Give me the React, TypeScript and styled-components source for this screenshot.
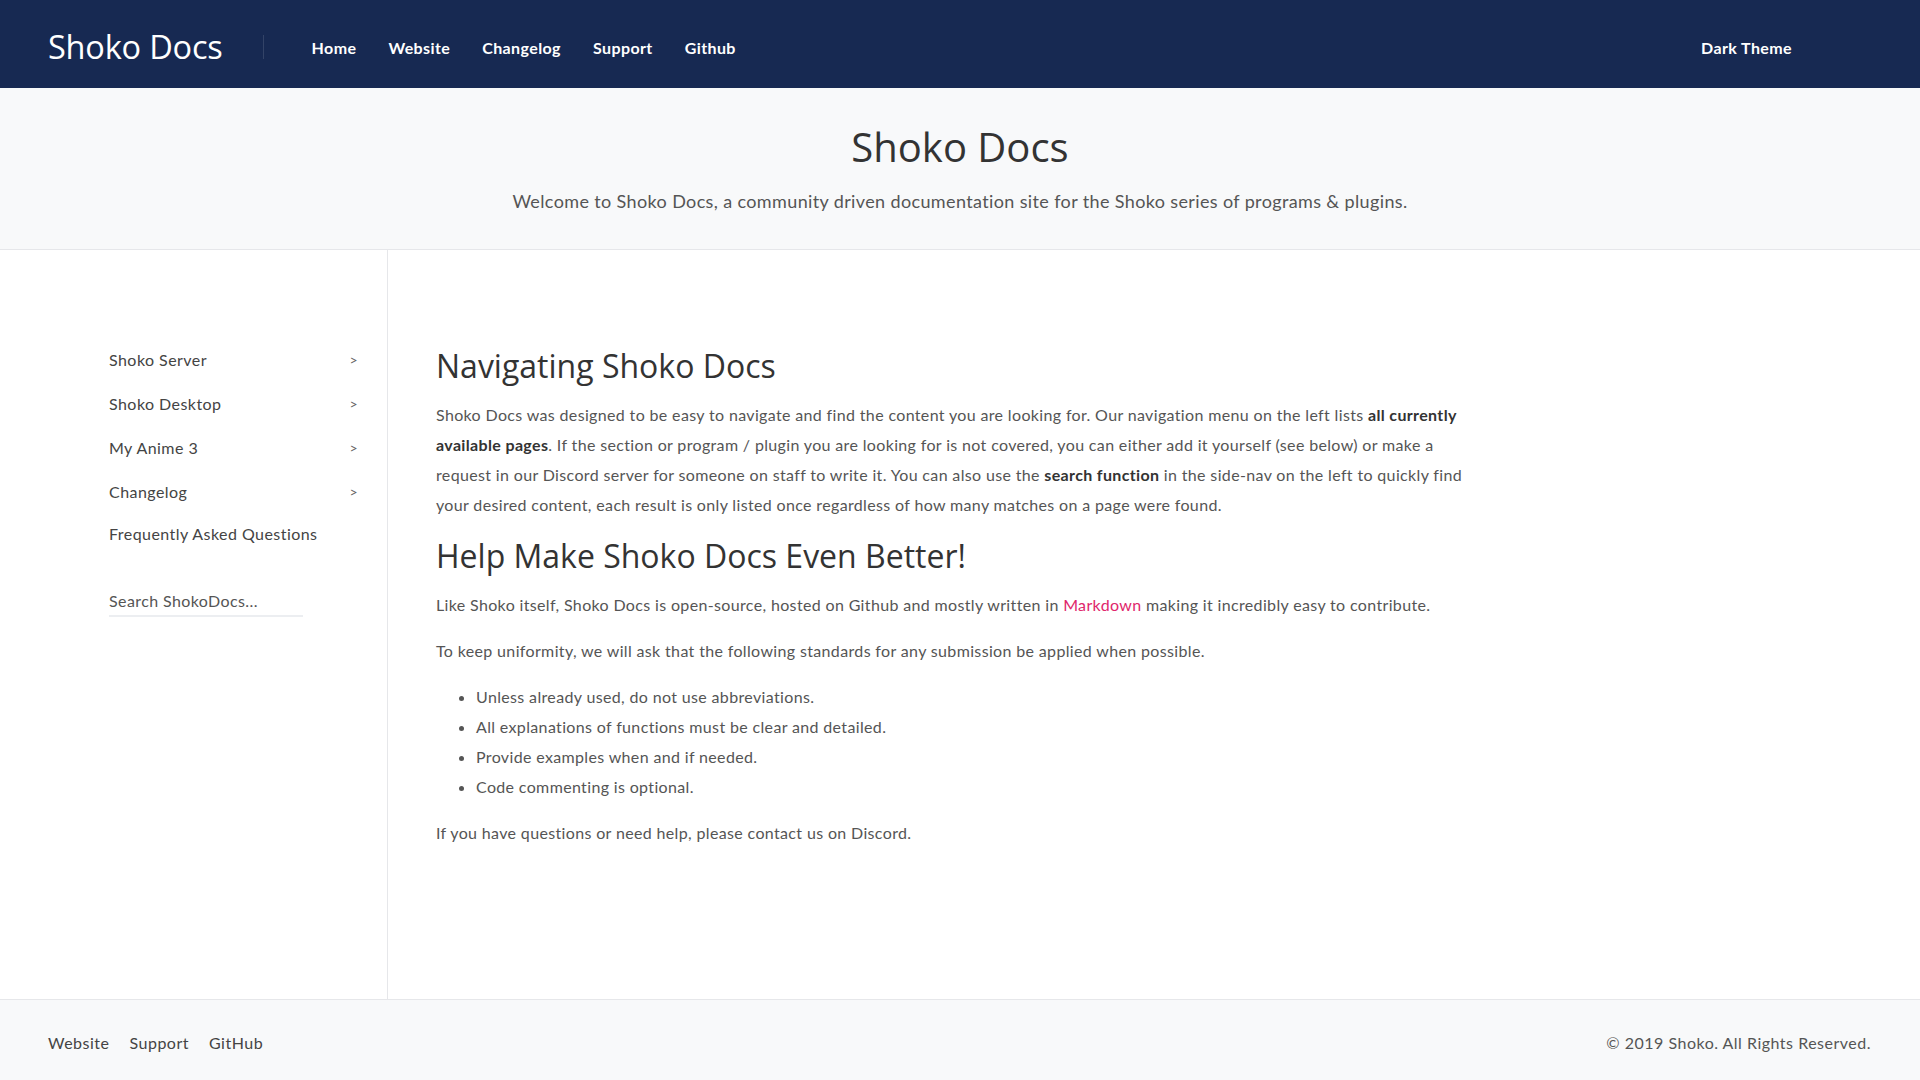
import React from "react";
import styled, { createGlobalStyle } from "styled-components";

const Global = createGlobalStyle`
  html, body { margin: 0; padding: 0; }
  body {
    font-family: "Lato", "Open Sans", sans-serif;
    color: #444;
    background: #fff;
  }
  * { box-sizing: border-box; }
`;

const Page = styled.div`
  display: flex;
  flex-direction: column;
  min-height: 1080px;
`;

const TopBar = styled.header`
  height: 88px;
  background: #172952;
  display: flex;
  align-items: center;
  padding: 6px 128px 0 48px;
`;

const Logo = styled.div`
  font-family: "Open Sans", sans-serif;
  font-size: 32.5px;
  color: #fff;
  padding-right: 40px;
  border-right: 1px solid rgba(255, 255, 255, 0.12);
  line-height: 24px;
  letter-spacing: -0.2px;
`;

const NavList = styled.nav`
  display: flex;
  gap: 32px;
  margin-left: 48px;
  flex: 1;
`;

const NavLink = styled.a`
  color: #fff;
  font-weight: 700;
  font-size: 16px;
  letter-spacing: 0.4px;
  text-decoration: none;
`;

const Hero = styled.section`
  background: #f8f9fa;
  border-bottom: 1px solid #e6e7ea;
  height: 162px;
  display: flex;
  flex-direction: column;
  align-items: center;
  padding-top: 35px;
`;

const HeroTitle = styled.h1`
  margin: 0;
  font-family: "Open Sans", sans-serif;
  font-weight: 400;
  font-size: 40px;
  line-height: 48px;
  color: #333;
`;

const HeroSub = styled.p`
  margin: 19px 0 0;
  font-size: 18px;
  letter-spacing: 0.37px;
  color: #555;
`;

const Body = styled.div`
  flex: 1;
  display: flex;
`;

const Sidebar = styled.aside`
  width: 388px;
  border-right: 1px solid #e6e7ea;
  padding: 87px 0 0 109px;
  display: flex;
  flex-direction: column;
`;

const SideItem = styled.a<{ $short?: boolean }>`
  display: flex;
  justify-content: space-between;
  width: 249px;
  height: ${(p) => (p.$short ? "40px" : "44px")};
  align-items: center;
  font-size: 16px;
  letter-spacing: 0.45px;
  color: #444;
  text-decoration: none;
`;

const Chevron = styled.span`
  font-size: 14px;
  color: #666;
`;

const SearchInput = styled.input`
  margin-top: 38px;
  width: 194px;
  border: none;
  border-bottom: 2px solid #eceef1;
  padding: 0 0 5px;
  font-family: inherit;
  font-size: 16px;
  letter-spacing: 0.4px;
  color: #444;
  outline: none;
  &::placeholder { color: #555; }
`;

const Main = styled.main`
  padding: 96px 0 0 48px;
  width: 1080px;
`;

const H2 = styled.h2`
  margin: 0 0 14px;
  font-family: "Open Sans", sans-serif;
  font-weight: 400;
  font-size: 32px;
  line-height: 40px;
  color: #333;
`;

const Para = styled.p`
  margin: 0 0 16px;
  font-size: 16px;
  letter-spacing: 0.35px;
  line-height: 30px;
  color: #555;
  b { color: #333; }
`;

const Pink = styled.a`
  color: #e0266b;
  text-decoration: none;
`;

const List = styled.ul`
  margin: 0 0 16px;
  padding-left: 40px;
  font-size: 16px;
  letter-spacing: 0.35px;
  line-height: 30px;
  color: #555;
`;

const Footer = styled.footer`
  height: 81px;
  background: #f8f9fa;
  border-top: 1px solid #e6e7ea;
  display: flex;
  align-items: center;
  justify-content: space-between;
  padding: 4px 49px 0 48px;
  font-size: 16px;
  letter-spacing: 0.5px;
  color: #555;
`;

const FootLinks = styled.div`
  display: flex;
  gap: 20px;
`;

const FootLink = styled.a`
  color: #444;
  text-decoration: none;
`;

const sideItems = ["Shoko Server", "Shoko Desktop", "My Anime 3", "Changelog"];

export default function App() {
  return (
    <Page>
      <Global />
      <TopBar>
        <Logo>Shoko Docs</Logo>
        <NavList>
          {["Home", "Website", "Changelog", "Support", "Github"].map((n) => (
            <NavLink key={n} href="#">{n}</NavLink>
          ))}
        </NavList>
        <NavLink href="#">Dark Theme</NavLink>
      </TopBar>
      <Hero>
        <HeroTitle>Shoko Docs</HeroTitle>
        <HeroSub>
          Welcome to Shoko Docs, a community driven documentation site for the Shoko series of programs &amp; plugins.
        </HeroSub>
      </Hero>
      <Body>
        <Sidebar>
          {sideItems.map((s) => (
            <SideItem key={s} href="#">
              {s}
              <Chevron>&gt;</Chevron>
            </SideItem>
          ))}
          <SideItem href="#" $short>Frequently Asked Questions</SideItem>
          <SearchInput placeholder="Search ShokoDocs..." />
        </Sidebar>
        <Main>
          <H2>Navigating Shoko Docs</H2>
          <Para>
            Shoko Docs was designed to be easy to navigate and find the content you are looking for. Our navigation menu on the left lists <b>all currently available pages</b>. If the section or program / plugin you are looking for is not covered, you can either add it yourself (see below) or make a request in our Discord server for someone on staff to write it. You can also use the <b>search function</b> in the side-nav on the left to quickly find your desired content, each result is only listed once regardless of how many matches on a page were found.
          </Para>
          <H2>Help Make Shoko Docs Even Better!</H2>
          <Para>
            Like Shoko itself, Shoko Docs is open-source, hosted on Github and mostly written in <Pink href="#">Markdown</Pink> making it incredibly easy to contribute.
          </Para>
          <Para>To keep uniformity, we will ask that the following standards for any submission be applied when possible.</Para>
          <List>
            <li>Unless already used, do not use abbreviations.</li>
            <li>All explanations of functions must be clear and detailed.</li>
            <li>Provide examples when and if needed.</li>
            <li>Code commenting is optional.</li>
          </List>
          <Para>If you have questions or need help, please contact us on Discord.</Para>
        </Main>
      </Body>
      <Footer>
        <FootLinks>
          <FootLink href="#">Website</FootLink>
          <FootLink href="#">Support</FootLink>
          <FootLink href="#">GitHub</FootLink>
        </FootLinks>
        <span>© 2019 Shoko. All Rights Reserved.</span>
      </Footer>
    </Page>
  );
}
